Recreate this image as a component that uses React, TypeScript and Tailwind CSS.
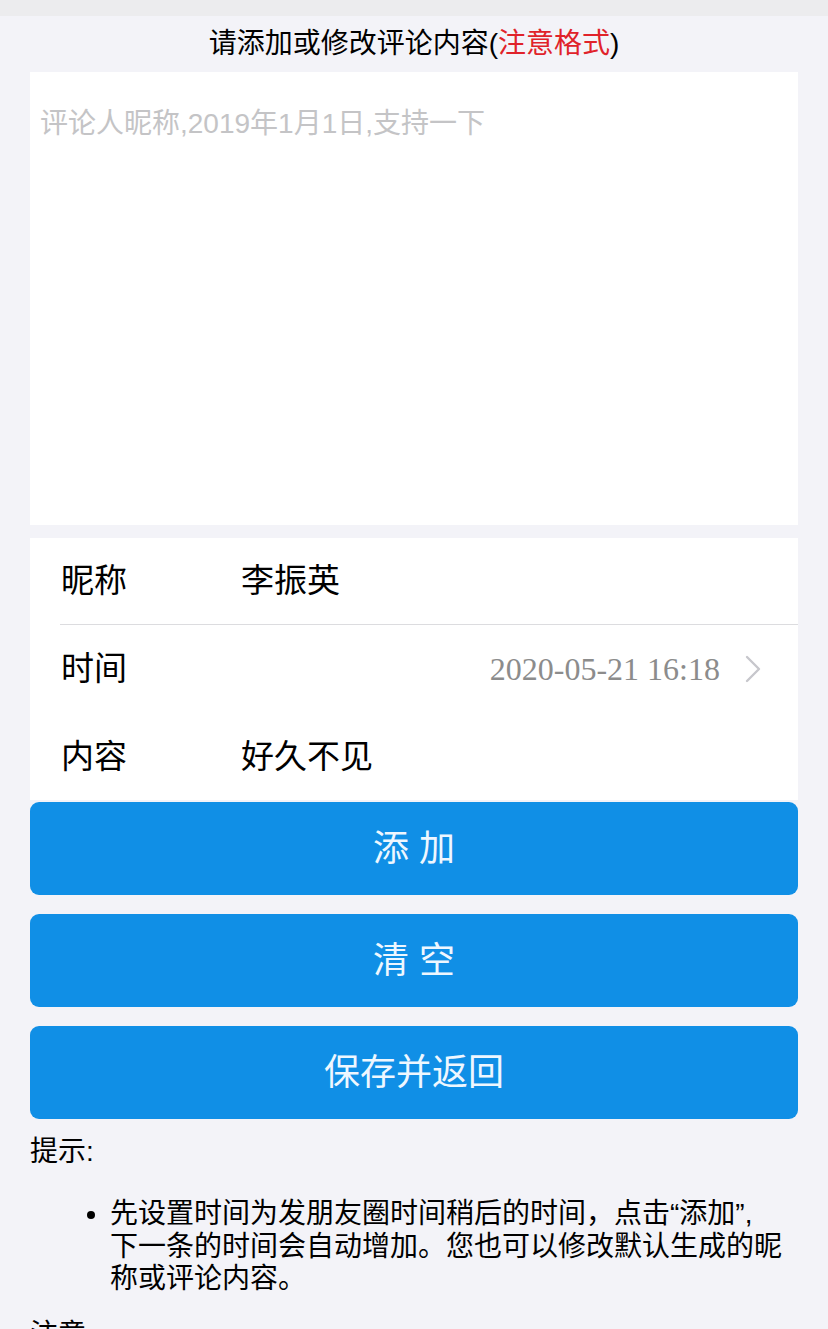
import React from "react";

const font = {
  fontFamily:
    '"Liberation Sans", "Noto Sans CJK SC", "Noto Sans", sans-serif',
};

function Chevron() {
  return (
    <svg width="18" height="30" viewBox="0 0 18 30" fill="none">
      <path
        d="M3 3 L15 15 L3 27"
        stroke="#c7c7cc"
        strokeWidth="2.4"
        strokeLinecap="round"
        strokeLinejoin="round"
      />
    </svg>
  );
}

export default function App() {
  return (
    <div className="min-h-[1329px] bg-[#f3f3f8] text-black overflow-hidden" style={font}>
      <div className="h-4 bg-[#ececee]" />
      <div className="h-[56px] flex items-center justify-center text-[28px] leading-[40px]">
        <span>请添加或修改评论内容(</span>
        <span className="text-[#e0222a]">注意格式</span>
        <span>)</span>
      </div>

      <div className="mx-[30px] h-[453px] bg-white pl-[10px] pt-[32px]">
        <div className="text-[28px] leading-[40px] text-[#c4c4c6]">
          评论人昵称,2019年1月1日,支持一下
        </div>
      </div>

      <div className="mx-[30px] mt-[13px] bg-white pl-[30px]">
        <div className="h-[87px] flex items-center border-b border-[#dcdcdf] text-[33px]">
          <div className="w-[181px] pl-[1px]">昵称</div>
          <div>李振英</div>
        </div>
        <div className="h-[88px] flex items-center text-[33px]">
          <div className="w-[181px] pl-[1px]">时间</div>
          <div className="flex-1 flex items-center justify-end pr-[36px]">
            <span
              className="text-[32px] text-[#8c8c8c] mr-[24px]"
              style={{ fontFamily: '"Liberation Serif", serif' }}
            >
              2020-05-21 16:18
            </span>
            <Chevron />
          </div>
        </div>
        <div className="h-[87px] flex items-center text-[33px]">
          <div className="w-[181px] pl-[1px]">内容</div>
          <div>好久不见</div>
        </div>
      </div>

      <div className="mx-[30px] mt-[2px] flex flex-col gap-[19px]">
        <button className="h-[93px] rounded-[9px] bg-[#108fe6] text-[#eef7ff] text-[36px] flex items-center justify-center">
          添 加
        </button>
        <button className="h-[93px] rounded-[9px] bg-[#108fe6] text-[#eef7ff] text-[36px] flex items-center justify-center">
          清 空
        </button>
        <button className="h-[93px] rounded-[9px] bg-[#108fe6] text-[#eef7ff] text-[36px] flex items-center justify-center">
          保存并返回
        </button>
      </div>

      <div className="mx-[30px] mt-[13px] text-[28px] leading-[40px]">提示:</div>
      <ul className="ml-[110px] mr-[30px] mt-[26px] list-disc text-[28px] leading-[32.5px]">
        <li>
          先设置时间为发朋友圈时间稍后的时间，点击“添加”,
          <br />
          下一条的时间会自动增加。您也可以修改默认生成的昵称或评论内容。
        </li>
      </ul>
      <div className="mx-[30px] mt-[19px] text-[28px] leading-[40px]">注意:</div>
    </div>
  );
}
